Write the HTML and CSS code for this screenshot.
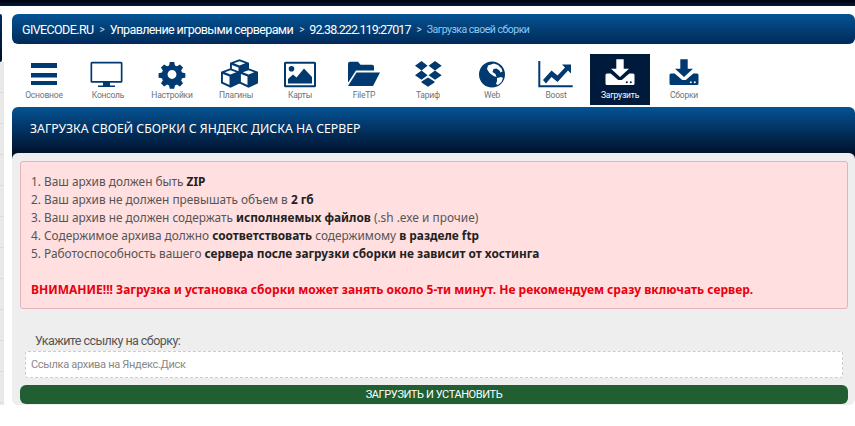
FILE: index.html
```html
<!DOCTYPE html>
<html lang="ru">
<head>
<meta charset="utf-8">
<title>Загрузка своей сборки</title>
<link rel="stylesheet" href="styles.css">
</head>
<body>
<div class="topbar"></div>
<div class="page">
  <aside class="rail"><div class="rail-dark"></div><div class="rail-grey"></div></aside>
  <main class="main">
    <nav class="crumbs">
      <span>GIVECODE.RU</span><i class="sep">&gt;</i>
      <span>Управление игровыми серверами</span><i class="sep">&gt;</i>
      <span class="crumb-ip">92.38.222.119:27017</span><i class="sep">&gt;</i>
      <span class="crumb-current">Загрузка своей сборки</span>
    </nav>
    <div class="tabs">
      <a class="tab"><svg class="ico" viewBox="0 0 32 32"><path d="M3 5h26v5H3zM3 15h26v4.500H3zM3 23h26v4H3z"/></svg><span>Основное</span></a>
      <a class="tab"><svg class="ico" viewBox="0 0 32 32"><path fill-rule="evenodd" d="M0 3.700h29a1.500 1.500 0 0 1 1.500 1.500v18a1.500 1.500 0 0 1-1.500 1.500H18v2.700h5v1.700H6v-1.700h5v-2.700H0a1.500 1.500 0 0 1-1.500-1.500v-18A1.500 1.500 0 0 1 0 3.700zm.3 1.800a.3.300 0 0 0-.1.300v16.900a.3.300 0 0 0 .3.300h28a.3.300 0 0 0 .3-.3V5.800a.3.300 0 0 0-.3-.3z"/></svg><span>Консоль</span></a>
      <a class="tab"><svg class="ico" viewBox="-2 -2.500 36 36"><path fill-rule="evenodd" d="M13.500 2h5l.8 3.800 2.300 1 3.300-2.100 3.500 3.500-2.100 3.300 1 2.300 3.700.8v5l-3.700.8-1 2.300 2.100 3.300-3.500 3.500-3.300-2.100-2.300 1-.8 3.800h-5l-.8-3.800-2.300-1-3.300 2.100-3.500-3.500 2.100-3.300-1-2.300-3.800-.8v-5l3.800-.8 1-2.300-2.100-3.300 3.500-3.500 3.300 2.100 2.300-1zM16 11a5 5 0 1 0 0 10 5 5 0 0 0 0-10z"/></svg><span>Настройки</span></a>
      <a class="tab"><svg class="ico" viewBox="-1 -1.300 32 32"><defs><g id="cube"><path d="M9.500 0L19 3.500V15l-9.500 4.500L0 15V3.500z"/><path class="face" d="M9.500 1.900L15.200 4 9.500 6.100 3.800 4zM1.900 5.700L8.500 8.100v8.700L1.900 13.800z"/></g></defs><use href="#cube" x="9"/><use href="#cube" y="9"/><use href="#cube" x="18" y="9"/></svg><span>Плагины</span></a>
      <a class="tab"><svg class="ico" viewBox="0 0 32 32"><path fill-rule="evenodd" d="M1.500 3.700h29A1.500 1.500 0 0 1 32 5.200v22.600a1.500 1.500 0 0 1-1.500 1.500h-29A1.500 1.500 0 0 1 0 27.800V5.200a1.500 1.500 0 0 1 1.500-1.500zM2 5.700v21.600h28V5.700zM7.500 8a2.800 2.800 0 1 1 0 5.600A2.800 2.800 0 0 1 7.500 8zM4 25.500V21l5-4.500 3.500 3 7.500-9 8 8.500v6.500z"/></svg><span>Карты</span></a>
      <a class="tab"><svg class="ico" viewBox="0 0 32 32"><path d="M0 5.700a2 2 0 0 1 2-2h8l2.500 3h11.500a2 2 0 0 1 2 2V12.500H8L.5 24H0zM8.500 14.500H32L25 28H0z"/></svg><span>FileTP</span></a>
      <a class="tab"><svg class="ico" viewBox="0 0 32 32"><path d="M9.500 3l6.100 4.800-6.100 4.700L3 7.800zM23 3l6.700 4.800-6.700 4.700-6.400-4.700zM3 17.200l6.500-4.700 6.100 4.700-6.100 4.500zM16.600 17.200l6.400-4.700 6.700 4.700-6.700 4.500zM9.500 23.500L16 19.500l6.500 4v1L16 28.700l-6.500-4.200z"/></svg><span>Тариф</span></a>
      <a class="tab"><svg class="ico" viewBox="0 0 32 32"><path fill-rule="evenodd" d="M16 3.500a13 13 0 1 1 0 26 13 13 0 0 1 0-26zM12 7.500l6-2 4 1.500 3.500 3.500 1 3-2 1-1-2-3-2-3 .5-1 3 3 2 1 3-3-1-4-3-2.500-4zM21 20l4-1 2 1-1.500 4-3.500 3-2-1 1-3z"/></svg><span>Web</span></a>
      <a class="tab"><svg class="ico" viewBox="0 0 32 32"><path d="M-1.700 3h2v24.300h32.400v2H-1.700z"/><path d="M3 22l8.500-9.500 6 5 7.500-8-3-3h9v9l-3-3-10.500 11.500-6-5-5.500 6.500z"/></svg><span>Boost</span></a>
      <a class="tab tab-active"><svg class="ico" viewBox="0 0 32 32"><path d="M12.300 1.300h7.400v9.500H25l-9 8.200-9-8.200h5.300z"/><path fill-rule="evenodd" d="M3 15.500h3.700l7.500 6.500h3.600l7.500-6.500H29a1.500 1.500 0 0 1 1.500 1.500v8.500A1.500 1.500 0 0 1 29 27H3a1.500 1.500 0 0 1-1.500-1.500V17A1.500 1.500 0 0 1 3 15.500zm19.800 7.700a1 1 0 1 0 0 2 1 1 0 0 0 0-2zm4 0a1 1 0 1 0 0 2 1 1 0 0 0 0-2z"/></svg><span>Загрузить</span></a>
      <a class="tab"><svg class="ico" viewBox="0 0 32 32"><path d="M12.300 1.300h7.400v9.500H25l-9 8.200-9-8.200h5.300z"/><path fill-rule="evenodd" d="M3 15.500h3.700l7.500 6.500h3.600l7.500-6.500H29a1.500 1.500 0 0 1 1.500 1.500v8.500A1.500 1.500 0 0 1 29 27H3a1.500 1.500 0 0 1-1.500-1.500V17A1.500 1.500 0 0 1 3 15.500zm19.800 7.700a1 1 0 1 0 0 2 1 1 0 0 0 0-2zm4 0a1 1 0 1 0 0 2 1 1 0 0 0 0-2z"/></svg><span>Сборки</span></a>
    </div>
    <h1 class="section-title">ЗАГРУЗКА СВОЕЙ СБОРКИ С ЯНДЕКС ДИСКА НА СЕРВЕР</h1>
    <section class="panel">
      <div class="alert">
        <p>1. Ваш архив должен быть <b>ZIP</b></p>
        <p>2. Ваш архив не должен превышать объем в <b>2 гб</b></p>
        <p>3. Ваш архив не должен содержать <b>исполняемых файлов</b> (.sh .exe и прочие)</p>
        <p>4. Содержимое архива должно <b>соответствовать</b> содержимому <b>в разделе ftp</b></p>
        <p>5. Работоспособность вашего <b>сервера после загрузки сборки не зависит от хостинга</b></p>
        <p class="warn"><b>ВНИМАНИЕ!!! Загрузка и установка сборки может занять около 5-ти минут. Не рекомендуем сразу включать сервер.</b></p>
      </div>
      <label class="field-label" for="link">Укажите ссылку на сборку:</label>
      <input class="field" id="link" type="text" placeholder="Ссылка архива на Яндекс.Диск">
      <button class="submit" type="button">ЗАГРУЗИТЬ И УСТАНОВИТЬ</button>
    </section>
  </main>
</div>
</body>
</html>
```
FILE: styles.css
```css
* { box-sizing: border-box; }
html, body { margin: 0; height: 100%; background: #fff; overflow: hidden; }
body { font-family: "Noto Sans", "Open Sans", sans-serif; color: #333; }
.topbar { height: 6px; background: linear-gradient(#00030f, #011a3a); }
.page { display: flex; }
.rail { width: 12px; flex: none; padding-top: 8px; display: flex; flex-direction: column; }
.rail-dark { width: 2px; height: 48px; background: linear-gradient(#012a59, #000f26); border-radius: 0 2px 2px 0; }
.rail-grey { width: 4px; height: 343px; background: repeating-linear-gradient(#e9e9e9 0, #e9e9e9 30px, #dcdcdc 30px, #dcdcdc 31px); }
.main { flex: 1; min-width: 0; padding-top: 8px; }
.crumbs { height: 30px; display: flex; align-items: center; padding-left: 10px; border-radius: 6px; background: linear-gradient(#045394, #012a59); color: #fff; font-family: Roboto, sans-serif; font-size: 12.500px; letter-spacing: -.6px; }
.crumbs span { white-space: nowrap; }
.crumbs .crumb-ip { letter-spacing: -.9px; }
.sep { font-style: normal; color: #cfe0ef; margin: 0 5px 0 6px; font-size: 10px; letter-spacing: 0; }
.crumbs .crumb-current { color: #8cc8f5; font-size: 10.500px; letter-spacing: -.5px; }
.tabs { display: flex; gap: 4px; height: 51px; margin-top: 10px; padding-left: 2px; }
.tab { width: 60px; flex: none; display: flex; flex-direction: column; align-items: center; padding-top: 4px; color: #6d7377; font-family: Roboto, sans-serif; font-size: 8.500px; line-height: 11px; letter-spacing: -.2px; }
.ico { width: 32px; height: 32px; fill: #003a70; overflow: visible; }
.face { fill: #fff; }
.tab-active { background: #001a3c; color: #fff; }
.tab-active .ico { fill: #fff; }
.section-title { height: 52px; margin: 2px 0 0; padding: 0 0 9px 18px; display: flex; align-items: center; border-radius: 6px 6px 0 0; background: linear-gradient(#045394, #00102a 90%); color: #fff; font-size: 12.300px; font-weight: 400; }
.panel { position: relative; height: 252px; margin-top: -6px; padding: 8px 7px 0 8px; background: #eee; border-radius: 6px; }
.alert { height: 148px; padding: 10px 10px 0; background: #ffdfdf; border: 1px solid #e3b5b8; border-radius: 3px; font-size: 11.850px; line-height: 18px; color: #555; }
.alert p { margin: 0; }
.alert b { color: #222; }
.alert .warn { margin-top: 19px; font-size: 12px; }
.alert .warn b { color: #e8000f; }
.field-label { display: block; margin: 25px 0 0 15px; font-family: Roboto, sans-serif; font-size: 12.500px; line-height: 14px; letter-spacing: -.55px; color: #555; }
.field { display: block; width: 818px; height: 27px; margin: 3px 0 0 5px; padding: 0 5px; background: #fff; border: 1px dashed #ccc; border-radius: 3px; font: 11px Roboto, sans-serif; letter-spacing: -.3px; outline: none; }
.field::placeholder { color: #888; opacity: 1; }
.submit { display: block; width: 100%; height: 19px; margin-top: 7px; padding: 0; background: #215f32; border: 0; border-radius: 6px; color: #fff; font: 11px Roboto, sans-serif; letter-spacing: -.4px; }
```
